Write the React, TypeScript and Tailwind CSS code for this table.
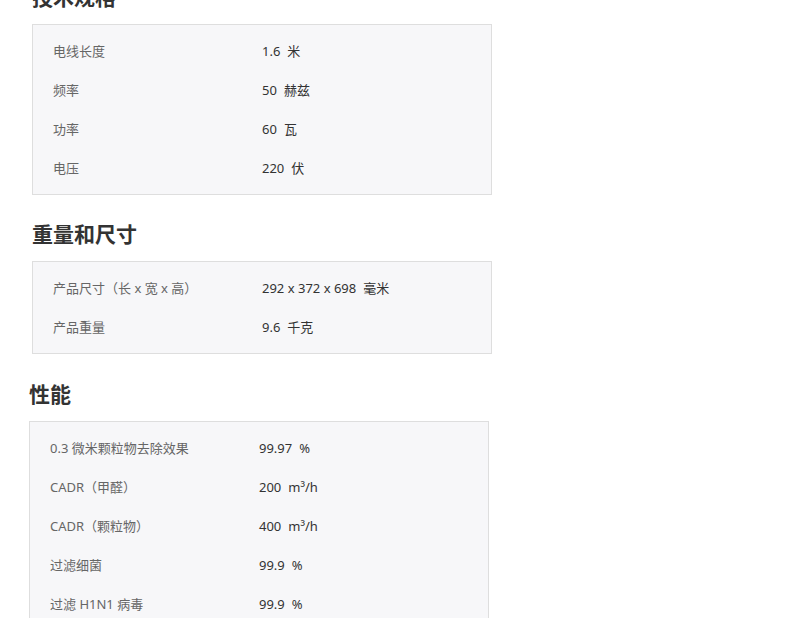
const FONT = { fontFamily: '"Noto Sans", "Noto Sans CJK SC", sans-serif' };

type Row = { label: string; value: string; unit: string };

const sections: { title: string; rows: Row[]; className: string }[] = [
  {
    title: "技术规格",
    className: "ml-[32px] mt-[-19px]",
    rows: [
      { label: "电线长度", value: "1.6", unit: "米" },
      { label: "频率", value: "50", unit: "赫兹" },
      { label: "功率", value: "60", unit: "瓦" },
      { label: "电压", value: "220", unit: "伏" },
    ],
  },
  {
    title: "重量和尺寸",
    className: "ml-[32px] mt-[23px]",
    rows: [
      { label: "产品尺寸（长 x 宽 x 高）", value: "292 x 372 x 698", unit: "毫米" },
      { label: "产品重量", value: "9.6", unit: "千克" },
    ],
  },
  {
    title: "性能",
    className: "ml-[29px] mt-[24px]",
    rows: [
      { label: "0.3 微米颗粒物去除效果", value: "99.97", unit: "%" },
      { label: "CADR（甲醛）", value: "200", unit: "m³/h" },
      { label: "CADR（颗粒物）", value: "400", unit: "m³/h" },
      { label: "过滤细菌", value: "99.9", unit: "%" },
      { label: "过滤 H1N1 病毒", value: "99.9", unit: "%" },
      { label: "过滤 H3N2 病毒", value: "99.9", unit: "%" },
    ],
  },
];

export default function App() {
  return (
    <div className="h-[618px] w-[790px] overflow-hidden bg-white" style={FONT}>
      {sections.map((s) => (
        <section key={s.title} className={`w-[460px] ${s.className}`}>
          <h2 className="mb-[10px] h-[33px] text-[21px] font-bold leading-[33px] text-[#333]">{s.title}</h2>
          <div className="border border-[#dedede] bg-[#f7f7f9] px-[20px] pt-[7px] pb-[6px]">
            {s.rows.map((r) => (
              <div key={r.label} className="flex h-[39px] items-center text-[13px]">
                <span className="w-[209px] shrink-0 text-[#666]">{r.label}</span>
                <span className="text-[#333]">
                  {r.value}
                  <span className="ml-[7px]">{r.unit}</span>
                </span>
              </div>
            ))}
          </div>
        </section>
      ))}
    </div>
  );
}
